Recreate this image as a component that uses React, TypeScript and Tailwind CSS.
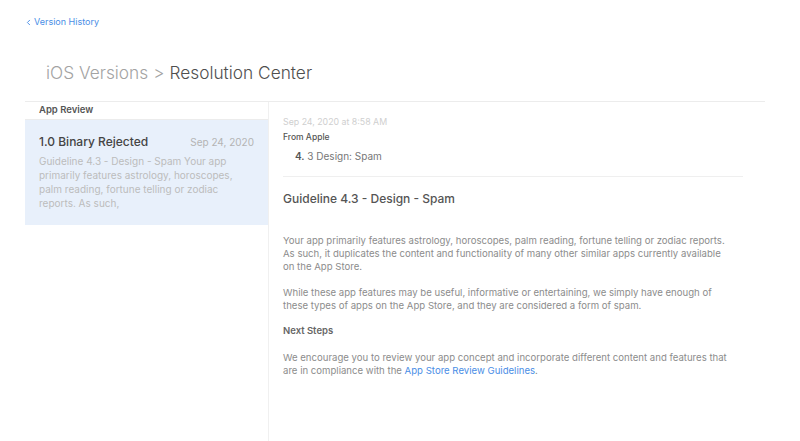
import * as React from "react"
import { ChevronLeft } from "lucide-react"

const font = { fontFamily: "Inter, 'Liberation Sans', sans-serif" }

export default function App() {
  return (
    <div className="w-[800px] h-[441px] bg-white overflow-hidden" style={font}>
      {/* 返回链接 */}
      <div className="pt-[16px] pl-[24px] flex items-center gap-[1px] text-[#4a8ee6] text-[9px] leading-[12px]">
        <ChevronLeft className="w-[9px] h-[9px]" strokeWidth={2.5} />
        <span>Version History</span>
      </div>

      {/* 标题 */}
      <div className="mt-[33px] pl-[46px] text-[17.3px] leading-[24px] font-light">
        <span className="text-[#a3a3a3]">iOS Versions</span>
        <span className="text-[#a3a3a3] mx-[5px]">&gt;</span>
        <span className="text-[#4f4f4f]">Resolution Center</span>
      </div>

      {/* 主体 */}
      <div className="mt-[16px] ml-[25px] w-[740px] border-t border-[#ececec] flex h-[340px]">
        {/* 左栏 */}
        <div className="w-[244px] shrink-0 border-r border-[#f0f0f0]">
          <div className="h-[18px] flex items-center pl-[14px] text-[9.5px] font-semibold text-[#555] border-b border-[#ececec]">
            App Review
          </div>
          <div className="bg-[#e8f0fb] h-[105px] px-[14px] pt-[14px]">
            <div className="flex items-baseline justify-between">
              <span className="text-[12px] leading-[16px] font-medium text-[#444]">1.0 Binary Rejected</span>
              <span className="text-[10px] text-[#b4b4b4]">Sep 24, 2020</span>
            </div>
            <p className="mt-[4px] text-[10px] leading-[14px] text-[#bcbcbc] pr-[18px]">
              Guideline 4.3 - Design - Spam Your app primarily features astrology, horoscopes, palm reading, fortune telling or zodiac reports. As such,
            </p>
          </div>
        </div>

        {/* 右栏 */}
        <div className="flex-1 pl-[14px] pr-[22px] pt-[14px]">
          <div className="text-[8.8px] leading-[12px] text-[#cfcfcf]">Sep 24, 2020 at 8:58 AM</div>
          <div className="mt-[3px] text-[8.5px] leading-[12px] font-medium text-[#555]">From Apple</div>
          <div className="mt-[6px] pl-[12px] text-[10px] leading-[14px] text-[#777]">
            <span className="font-semibold text-[#555]">4.</span> 3 Design: Spam
          </div>
          <div className="mt-[13px] border-t border-[#efefef]" />
          <div className="mt-[14px] text-[12px] leading-[16px] font-medium text-[#555]">
            Guideline 4.3 - Design - Spam
          </div>
          <div className="mt-[27px] text-[9.6px] leading-[13px] text-[#8c8c8c] pr-[12px]">
            <p>
              Your app primarily features astrology, horoscopes, palm reading, fortune telling or zodiac reports. As such, it duplicates the content and functionality of many other similar apps currently available on the App Store.
            </p>
            <p className="mt-[13px]">
              While these app features may be useful, informative or entertaining, we simply have enough of these types of apps on the App Store, and they are considered a form of spam.
            </p>
            <p className="mt-[12px] text-[9.5px] font-semibold text-[#666]">Next Steps</p>
            <p className="mt-[14px]">
              We encourage you to review your app concept and incorporate different content and features that are in compliance with the{" "}
              <span className="text-[#4a8ee6]">App Store Review Guidelines</span>.
            </p>
          </div>
        </div>
      </div>
    </div>
  )
}
